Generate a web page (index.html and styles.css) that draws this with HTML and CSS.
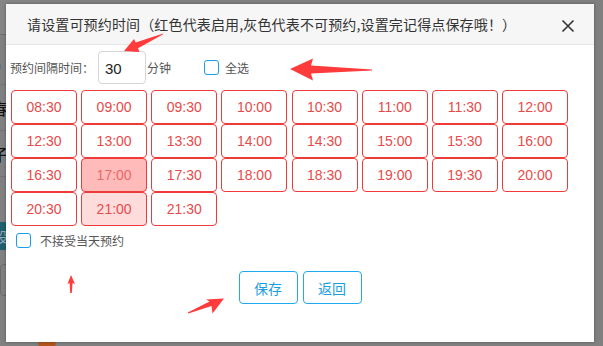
FILE: index.html
```html
<!DOCTYPE html>
<html lang="zh">
<head>
<meta charset="utf-8">
<title>预约时间设置</title>
<link rel="stylesheet" href="styles.css">
</head>
<body>
<div class="page">
  <div class="side">
    <div class="side-top"></div>
    <div class="side-row r1">9</div>
    <div class="side-row r2">春</div>
    <div class="side-row r3">子</div>
    <div class="side-teal">设</div>
    <div class="side-box"></div>
    <div class="side-rest"></div>
  </div>
  <div class="bottom-bits"><span class="blob"></span></div>
</div>

<div class="dialog">
  <div class="dlg-head">
    <span class="dlg-title">请设置可预约时间（红色代表启用,灰色代表不可预约,设置完记得点保存哦！）</span>
    <svg class="close" width="14" height="14" viewBox="0 0 14 14"><path d="M1.5 1.5 L12.5 12.5 M12.5 1.5 L1.5 12.5" stroke="#333" stroke-width="1.6" fill="none"/></svg>
  </div>
  <div class="dlg-body">
    <div class="interval-row">
      <span class="lbl">预约间隔时间：</span>
      <input class="interval" type="text" value="30">
      <span class="lbl unit">分钟</span>
      <span class="chk"></span>
      <span class="lbl">全选</span>
    </div>
    <div class="slots">
      <button class="slot">08:30</button><button class="slot">09:00</button><button class="slot">09:30</button><button class="slot">10:00</button><button class="slot">10:30</button><button class="slot">11:00</button><button class="slot">11:30</button><button class="slot">12:00</button>
      <button class="slot">12:30</button><button class="slot">13:00</button><button class="slot">13:30</button><button class="slot">14:00</button><button class="slot">14:30</button><button class="slot">15:00</button><button class="slot">15:30</button><button class="slot">16:00</button>
      <button class="slot">16:30</button><button class="slot sel-strong">17:00</button><button class="slot">17:30</button><button class="slot">18:00</button><button class="slot">18:30</button><button class="slot">19:00</button><button class="slot">19:30</button><button class="slot">20:00</button>
      <button class="slot">20:30</button><button class="slot sel-light">21:00</button><button class="slot">21:30</button>
    </div>
    <div class="chk-row">
      <span class="chk"></span>
      <span class="lbl">不接受当天预约</span>
    </div>
    <div class="actions">
      <button class="btn">保存</button>
      <button class="btn">返回</button>
    </div>
  </div>
</div>

<svg class="annot" width="603" height="346" viewBox="0 0 603 346">
  <g fill="#ff3b3b">
    <polygon points="163.2,33.6 162.8,34.4 138,48.2 139.6,52 124,51 134,39 135.6,42.6"/>
    <polygon points="372,69.4 372,70.6 311,73.5 313,80.5 290,69 313,58.5 311,65.5"/>
    <polygon points="71.8,293 70.2,293 69.6,283 67.5,284 71,275 75,284 72.6,283"/>
    <polygon points="187.8,312.6 188.4,313.6 211.5,306 212.5,313.5 224,298.5 206,299.5 209.5,301.5"/>
  </g>
</svg>
</body>
</html>
```
FILE: styles.css
```css
* { box-sizing: border-box; }
html, body { margin: 0; padding: 0; }
body {
  width: 603px;
  height: 346px;
  overflow: hidden;
  background: #808080;
  font-family: "Noto Sans CJK SC", "Liberation Sans", sans-serif;
  position: relative;
}
.page {
  width: 603px;
  height: 346px;
  display: flex;
  flex-direction: column;
  justify-content: space-between;
}
.side {
  width: 40px;
  display: flex;
  flex-direction: column;
}
.side-top { height: 35px; border-bottom: 1px solid #6e6e6e; background: #858585; }
.side-row {
  height: 46px;
  font-size: 16px;
  line-height: 46px;
  color: #111;
  padding-left: 0;
  text-indent: -8px;
  border-bottom: 1px solid #737373;
}
.side-row.r1 { height: 50px; line-height: 62px; }
.side-teal {
  margin-top: 45px;
  height: 28px;
  background: #1f5f6e;
  color: #9ab;
  font-size: 14px;
  line-height: 28px;
  text-indent: -6px;
}
.side-box { margin-top: 14px; height: 32px; border: 1px solid #6a6a6a; border-radius: 4px; }
.side-rest { flex: 1; }
.bottom-bits { height: 4px; position: relative; }
.blob { position: absolute; left: 38px; top: 0; width: 18px; height: 4px; background: #b4541e; border-radius: 3px; }

.dialog {
  position: absolute;
  left: 6px;
  top: 4px;
  width: 588px;
  height: 338px;
  background: #fff;
  box-shadow: 0 0 3px rgba(0,0,0,0.35);
  display: flex;
  flex-direction: column;
}
.dlg-head {
  height: 41px;
  background: #f6f6f6;
  border-bottom: 1px solid #e6e6e6;
  display: flex;
  align-items: center;
  justify-content: space-between;
  padding: 0 19px 0 21px;
}
.dlg-title {
  font-size: 14px;
  color: #333;
  white-space: nowrap;
  letter-spacing: 0.15px;
}
.close { display: block; margin-top: 3px; }
.dlg-body {
  display: flex;
  flex-direction: column;
  padding: 6px 0 0 4px;
}
.interval-row {
  display: flex;
  align-items: center;
  height: 33px;
}
.lbl { font-size: 12px; color: #555; white-space: nowrap; }
.interval {
  width: 48px;
  height: 33px;
  border: 1px solid #d6d6d6;
  border-radius: 4px;
  padding: 2px 0 0 6px;
  margin: 0 1px 0 4px;
  font-family: "Liberation Sans", sans-serif;
  font-size: 15px;
  color: #222;
  outline: none;
}
.unit { margin-right: 33px; }
.chk {
  display: inline-block;
  width: 15px;
  height: 15px;
  border: 1.5px solid #1a9ee8;
  border-radius: 3px;
  margin-right: 6px;
  background: #fff;
}
.slots {
  display: grid;
  grid-template-columns: repeat(8, 66px);
  column-gap: 4.15px;
  margin: 6px 0 0 1px;
}
.slot {
  height: 34px;
  border: 1px solid #ef3a3a;
  border-radius: 4px;
  background: #fff;
  color: #e84a4a;
  font-family: "Liberation Sans", sans-serif;
  font-size: 14px;
  padding: 0;
}
.slot.sel-strong { background: #ffbaba; color: #e86a6a; }
.slot.sel-light { background: #ffdcdc; }
.chk-row {
  display: flex;
  align-items: center;
  margin: 7px 0 0 6px;
  height: 15px;
}
.chk-row .chk { margin-right: 9px; }
.actions {
  display: flex;
  justify-content: center;
  gap: 5px;
  margin-top: 23px;
  padding-right: 4px;
}
.btn {
  width: 59px;
  height: 33px;
  border: 1px solid #1eaaf0;
  border-radius: 4px;
  background: #fff;
  color: #1a9ee0;
  font-family: "Noto Sans CJK SC", sans-serif;
  font-size: 14px;
  padding: 0;
}
.annot { position: absolute; left: 0; top: 0; pointer-events: none; }
```
